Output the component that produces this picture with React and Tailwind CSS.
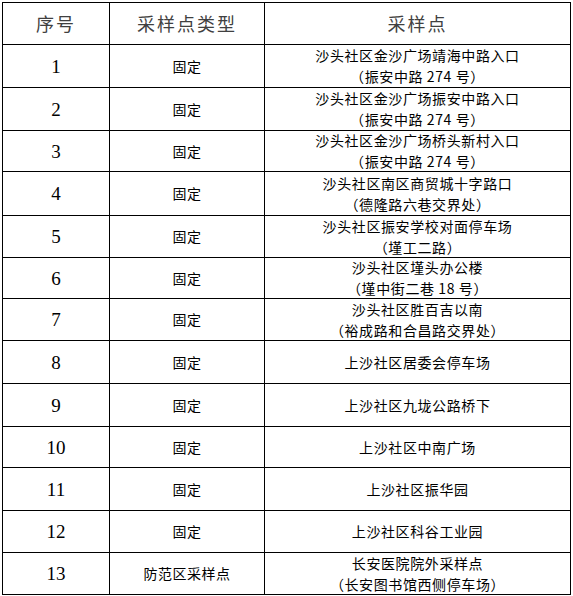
const ROWS = [
  { n: '1', type: '固定', place: ['沙头社区金沙广场靖海中路入口', '（振安中路 274 号）'], h: 'h-[43px]' },
  { n: '2', type: '固定', place: ['沙头社区金沙广场振安中路入口', '（振安中路 274 号）'], h: 'h-[43px]' },
  { n: '3', type: '固定', place: ['沙头社区金沙广场桥头新村入口', '（振安中路 274 号）'], h: 'h-[41px]' },
  { n: '4', type: '固定', place: ['沙头社区南区商贸城十字路口', '（德隆路六巷交界处）'], h: 'h-[44px]' },
  { n: '5', type: '固定', place: ['沙头社区振安学校对面停车场', '（墐工二路）'], h: 'h-[42px]' },
  { n: '6', type: '固定', place: ['沙头社区墐头办公楼', '（墐中街二巷 18 号）'], h: 'h-[41px]' },
  { n: '7', type: '固定', place: ['沙头社区胜百吉以南', '（裕成路和合昌路交界处）'], h: 'h-[42px]' },
  { n: '8', type: '固定', place: ['上沙社区居委会停车场'], h: 'h-[43px]' },
  { n: '9', type: '固定', place: ['上沙社区九垅公路桥下'], h: 'h-[43px]' },
  { n: '10', type: '固定', place: ['上沙社区中南广场'], h: 'h-[41px]' },
  { n: '11', type: '固定', place: ['上沙社区振华园'], h: 'h-[43px]' },
  { n: '12', type: '固定', place: ['上沙社区科谷工业园'], h: 'h-[42px]' },
  { n: '13', type: '防范区采样点', place: ['长安医院院外采样点', '（长安图书馆西侧停车场）'], h: 'h-[42px]' },
]

const cjk = { fontFamily: '"Noto Sans CJK SC", "Noto Sans", sans-serif' }
const serif = { fontFamily: '"Liberation Serif", "DejaVu Serif", serif' }

const cell = 'border-r border-b border-black flex flex-col items-center justify-center text-center'

export default function App() {
  return (
    <div className="w-[573px] h-[596px] bg-white pt-[2px] pl-[2px] overflow-hidden">
      <div
        className="grid grid-cols-[107px_155px_306px] border-l border-t border-black w-[569px]"
        style={cjk}
      >
        {/* Header */}
        <div className={`${cell} h-[42px] text-[18px] tracking-[2px] text-[#404040]`}>序号</div>
        <div className={`${cell} h-[42px] text-[18px] tracking-[2px] text-[#404040]`}>采样点类型</div>
        <div className={`${cell} h-[42px] text-[18px] tracking-[2px] text-[#404040]`}>采样点</div>

        {ROWS.map(r => (
          <div key={r.n} className="contents">
            <div className={`${cell} ${r.h} text-[19px] leading-none text-black`} style={serif}>
              {r.n}
            </div>
            <div className={`${cell} ${r.h} text-[14px] tracking-[0.5px] text-black`}>
              {r.type}
            </div>
            <div className={`${cell} ${r.h} text-[14px] leading-[21px] tracking-[0.6px] text-black`}>
              {r.place.map(line => (
                <div key={line}>{line}</div>
              ))}
            </div>
          </div>
        ))}
      </div>
    </div>
  )
}
